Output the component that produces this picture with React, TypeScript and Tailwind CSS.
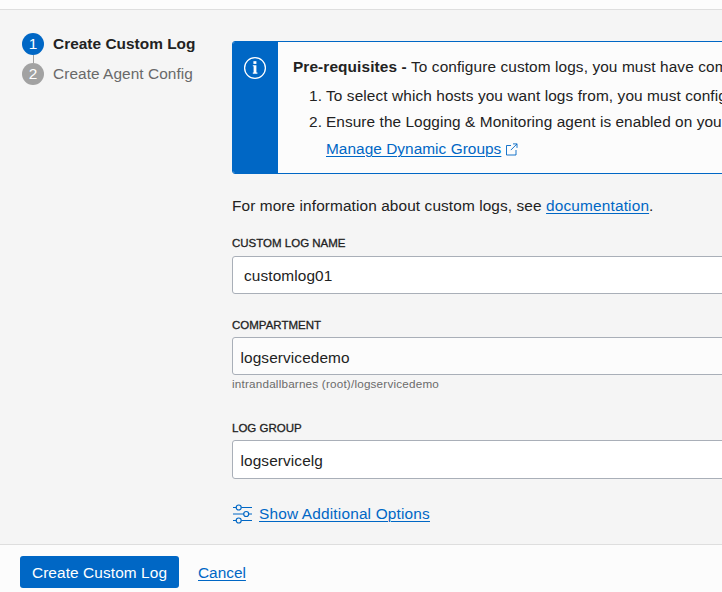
import type { ReactNode } from "react";

function Link({ children, className = "" }: { children: ReactNode; className?: string }) {
  return (
    <a href="#" className={`text-[#0067c5] underline decoration-1 underline-offset-2 ${className}`}>
      {children}
    </a>
  );
}

function InfoIcon() {
  return (
    <svg width="24" height="24" viewBox="0 0 24 24" fill="none">
      <circle cx="12" cy="12" r="10.4" stroke="white" strokeWidth="1.3" />
      <rect x="10.4" y="5.2" width="3" height="2.7" fill="white" />
      <path d="M9.8 9.2h3.6v7.4h1v1.2H9.8v-1.2h.8v-6.3h-.8z" fill="white" />
    </svg>
  );
}

function ExternalIcon() {
  return (
    <svg width="13" height="13" viewBox="0 0 13 13" fill="none" stroke="#0067c5" strokeWidth="0.9">
      <path d="M6 2.5H1.5v9.5h9.5V7M8 0.9h4v4M12 0.9L5.8 7.1" />
    </svg>
  );
}

function OptionsIcon() {
  return (
    <svg width="20" height="20" viewBox="0 0 20 20" fill="none" stroke="#0067c5" strokeWidth="1">
      <path d="M1 3.5h3.2M9.3 3.5H20M1 10h10.7M16.8 10H20M1 16.5h3.2M9.3 16.5H20" />
      <circle cx="6.7" cy="3.5" r="2.5" strokeWidth="1.2" />
      <circle cx="14.2" cy="10" r="2.5" strokeWidth="1.2" />
      <circle cx="6.7" cy="16.5" r="2.5" strokeWidth="1.2" />
    </svg>
  );
}

function Label({ children, className = "" }: { children: ReactNode; className?: string }) {
  return (
    <label className={`block h-4 text-[11.5px] leading-4 tracking-normal [-webkit-text-stroke:0.3px_#222] ${className}`}>
      {children}
    </label>
  );
}

export default function App() {
  return (
    <div className="flex h-[592px] w-[722px] flex-col overflow-hidden whitespace-nowrap bg-[#f5f5f5] font-['Liberation_Sans',Arial,sans-serif] text-[15.4px] leading-5 tracking-[0.1px] text-[#222]">
      <header className="h-2.5 shrink-0 border-b border-[#dedede] bg-[#fcfcfc]" />
      <main className="flex h-[534px] shrink-0">
        <nav className="w-[232px] shrink-0 pl-[22px] pt-[23px]">
          <div className="flex h-[22px] items-center">
            <span className="flex size-[22px] items-center justify-center rounded-full bg-[#0067c5] text-white">1</span>
            <span className="ml-[9px] font-bold tracking-[0.03px]">Create Custom Log</span>
          </div>
          <div className="ml-[11px] h-2 w-px bg-[#a2a2a2]" />
          <div className="flex h-[22px] items-center">
            <span className="flex size-[22px] items-center justify-center rounded-full bg-[#a2a2a2] text-white">2</span>
            <span className="ml-[9px] tracking-[0.07px] text-[#696969]">Create Agent Config</span>
          </div>
        </nav>
        <div className="w-[600px] shrink-0 pt-[31px]">
          <section className="flex h-[133px] overflow-hidden rounded-[3px] border border-[#0067c5] bg-[#fcfcfc]">
            <div className="w-[45px] shrink-0 bg-[#0067c5] pl-2.5 pt-3.5">
              <InfoIcon />
            </div>
            <div className="pl-[15px] pt-[15px]">
              <p>
                <b>Pre-requisites - </b>To configure custom logs, you must have completed:
              </p>
              <ol className="mt-[6px] pl-[33px] leading-[26px]">
                <li className="flex">
                  <span className="-ml-[17px] w-[17px]">1.</span>To select which hosts you want logs from, you must configure
                </li>
                <li className="flex tracking-[0.07px]">
                  <span className="-ml-[17px] w-[17px]">2.</span>Ensure the Logging &amp; Monitoring agent is enabled on your hosts
                </li>
              </ol>
              <div className="flex items-center pl-[33px] leading-[28px]">
                <Link className="tracking-[0.04px]">Manage Dynamic Groups</Link>
                <span className="ml-[4px]"><ExternalIcon /></span>
              </div>
            </div>
          </section>
          <p className="mt-[22px]">
            For more information about custom logs, see <Link className="tracking-[0.16px]">documentation</Link>.
          </p>
          <Label className="mt-[19px]">CUSTOM LOG NAME</Label>
          <div className="mt-[5px] flex h-[38px] items-center rounded-[3px] border border-[#a9afb8] bg-white pl-[11px] pt-0.5">customlog01</div>
          <Label className="mt-[23px]">COMPARTMENT</Label>
          <div className="mt-1 flex h-[38px] items-center rounded-[3px] border border-[#a9afb8] bg-[#fcfcfc] pl-[7.5px] pt-1">logservicedemo</div>
          <p className="mt-px h-4 text-[11.7px] leading-4 tracking-[0.2px] text-[#6b6b6b]">intrandallbarnes (root)/logservicedemo</p>
          <Label className="mt-7">LOG GROUP</Label>
          <div className="mt-1 flex h-[39px] items-center rounded-[3px] border border-[#a9afb8] bg-white pl-[7.5px] pt-0.5">logservicelg</div>
          <div className="mt-[25px] flex h-5 items-center">
            <OptionsIcon />
            <Link className="ml-[7px] tracking-[0.18px]">Show Additional Options</Link>
          </div>
        </div>
      </main>
      <footer className="flex h-12 shrink-0 border-t border-[#dedede] bg-[#fcfcfc] pl-5 pt-[11px]">
        <button className="h-8 w-[159px] rounded-[3px] bg-[#0067c5] pt-0.5 text-white">Create Custom Log</button>
        <Link className="ml-[19px] mt-[7px] h-5 tracking-normal">Cancel</Link>
      </footer>
    </div>
  );
}
